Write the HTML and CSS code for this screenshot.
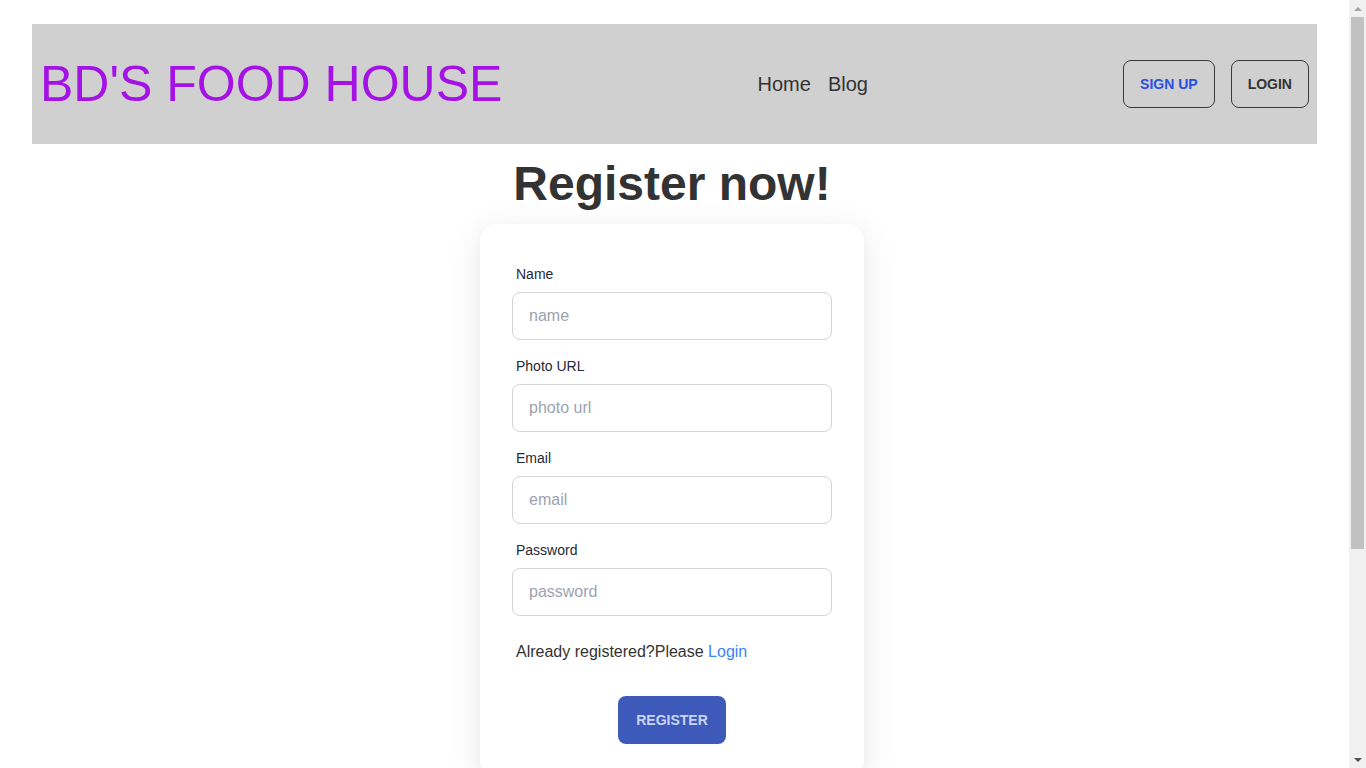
FILE: index.html
```html
<!DOCTYPE html>
<html lang="en">
<head>
<meta charset="utf-8">
<title>BD's Food House - Register</title>
<link rel="stylesheet" href="styles.css">
</head>
<body>
<div class="page">
  <header class="navbar">
    <div class="brand">BD'S FOOD HOUSE</div>
    <nav class="links">
      <a href="#" class="link">Home</a>
      <a href="#" class="link">Blog</a>
    </nav>
    <div class="actions">
      <a href="#" class="btn btn-outline btn-signup">SIGN UP</a>
      <a href="#" class="btn btn-outline">LOGIN</a>
    </div>
  </header>

  <main class="main">
    <h1 class="heading">Register now!</h1>
    <div class="card">
      <form class="card-body">
        <div class="form-control">
          <label class="label">Name</label>
          <input class="input" type="text" placeholder="name">
        </div>
        <div class="form-control">
          <label class="label">Photo URL</label>
          <input class="input" type="text" placeholder="photo url">
        </div>
        <div class="form-control">
          <label class="label">Email</label>
          <input class="input" type="text" placeholder="email">
        </div>
        <div class="form-control">
          <label class="label">Password</label>
          <input class="input" type="password" placeholder="password">
        </div>
        <p class="already">Already registered?Please <a href="#" class="login-link">Login</a></p>
        <div class="submit-row">
          <button type="button" class="btn-primary">REGISTER</button>
        </div>
      </form>
    </div>
  </main>
  <div class="spacer"></div>
</div>

<div class="scrollbar" aria-hidden="true">
  <div class="sb-arrow sb-up"></div>
  <div class="sb-track">
    <div class="sb-thumb"></div>
  </div>
  <div class="sb-arrow sb-down"></div>
</div>
</body>
</html>
```

FILE: styles.css
```css
* {
  box-sizing: border-box;
}

html, body {
  margin: 0;
  padding: 0;
  background: #ffffff;
}

html {
  scrollbar-width: none;
}

html::-webkit-scrollbar {
  display: none;
}

body {
  font-family: "Liberation Sans", Arial, sans-serif;
  color: #333333;
  margin-right: 17px;
}

a {
  text-decoration: none;
}

.page {
  padding: 24px 32px 0;
}

.navbar {
  height: 120px;
  background: #d0d0d0;
  display: flex;
  align-items: center;
  justify-content: space-between;
  padding: 0 8px;
}

.brand {
  font-size: 50px;
  line-height: 1;
  color: #a412e6;
  white-space: nowrap;
}

.links {
  display: flex;
  gap: 17px;
}

.link {
  font-size: 20px;
  color: #333333;
  line-height: 28px;
}

.actions {
  display: flex;
  gap: 16px;
}

.btn {
  display: inline-flex;
  align-items: center;
  justify-content: center;
  height: 48px;
  padding: 0 16px;
  border-radius: 8px;
  font-size: 14px;
  font-weight: 700;
  color: #333333;
}

.btn-outline {
  border: 1px solid #3a3a3a;
  background: transparent;
}

.btn-signup {
  color: #2a4fe3;
}

.main {
  display: flex;
  flex-direction: column;
  align-items: center;
  margin-right: 5px;
}

.heading {
  font-size: 48px;
  line-height: 1;
  font-weight: 700;
  color: #333333;
  margin: 16px 0;
}

.card {
  width: 384px;
  background: #ffffff;
  border-radius: 16px;
  box-shadow: 0 8px 36px rgba(0, 0, 0, 0.09), 0 2px 8px rgba(0, 0, 0, 0.03);
}

.card-body {
  padding: 32px;
  display: flex;
  flex-direction: column;
  gap: 8px;
  margin: 0;
}

.form-control {
  display: flex;
  flex-direction: column;
}

.label {
  display: block;
  padding: 8px 4px;
  font-size: 14px;
  line-height: 20px;
  color: #1f2937;
}

.input {
  height: 48px;
  width: 100%;
  border: 1px solid #d4d4d8;
  border-radius: 8px;
  padding: 0 16px;
  font-family: "Liberation Sans", Arial, sans-serif;
  font-size: 16px;
  color: #1f2937;
  background: #ffffff;
  outline: none;
}

.input::placeholder {
  color: #9ca3af;
}

.already {
  margin: 16px 0 0;
  padding: 0 4px;
  font-size: 16px;
  line-height: 24px;
  color: #333333;
}

.login-link {
  color: #3b82f6;
}

.submit-row {
  display: flex;
  justify-content: center;
  margin-top: 24px;
}

.btn-primary {
  height: 48px;
  padding: 0 18px;
  border: none;
  border-radius: 8px;
  background: #3d59b9;
  color: #c9d4f7;
  font-family: "Liberation Sans", Arial, sans-serif;
  font-size: 14px;
  font-weight: 700;
  cursor: pointer;
}

.spacer {
  height: 280px;
}

/* emulated browser scrollbar */
.scrollbar {
  position: fixed;
  top: 0;
  right: 0;
  width: 17px;
  height: 100vh;
  background: #f1f1f1;
  display: flex;
  flex-direction: column;
}

.sb-arrow {
  height: 17px;
  flex: 0 0 17px;
  display: flex;
  align-items: center;
  justify-content: center;
}

.sb-up::before {
  content: "";
  border-left: 4px solid transparent;
  border-right: 4px solid transparent;
  border-bottom: 4px solid #a3a3a3;
}

.sb-down::before {
  content: "";
  border-left: 4px solid transparent;
  border-right: 4px solid transparent;
  border-top: 4px solid #505050;
}

.sb-track {
  flex: 1;
  padding: 0 2px;
}

.sb-thumb {
  height: 532px;
  background: #c1c1c1;
}
```
